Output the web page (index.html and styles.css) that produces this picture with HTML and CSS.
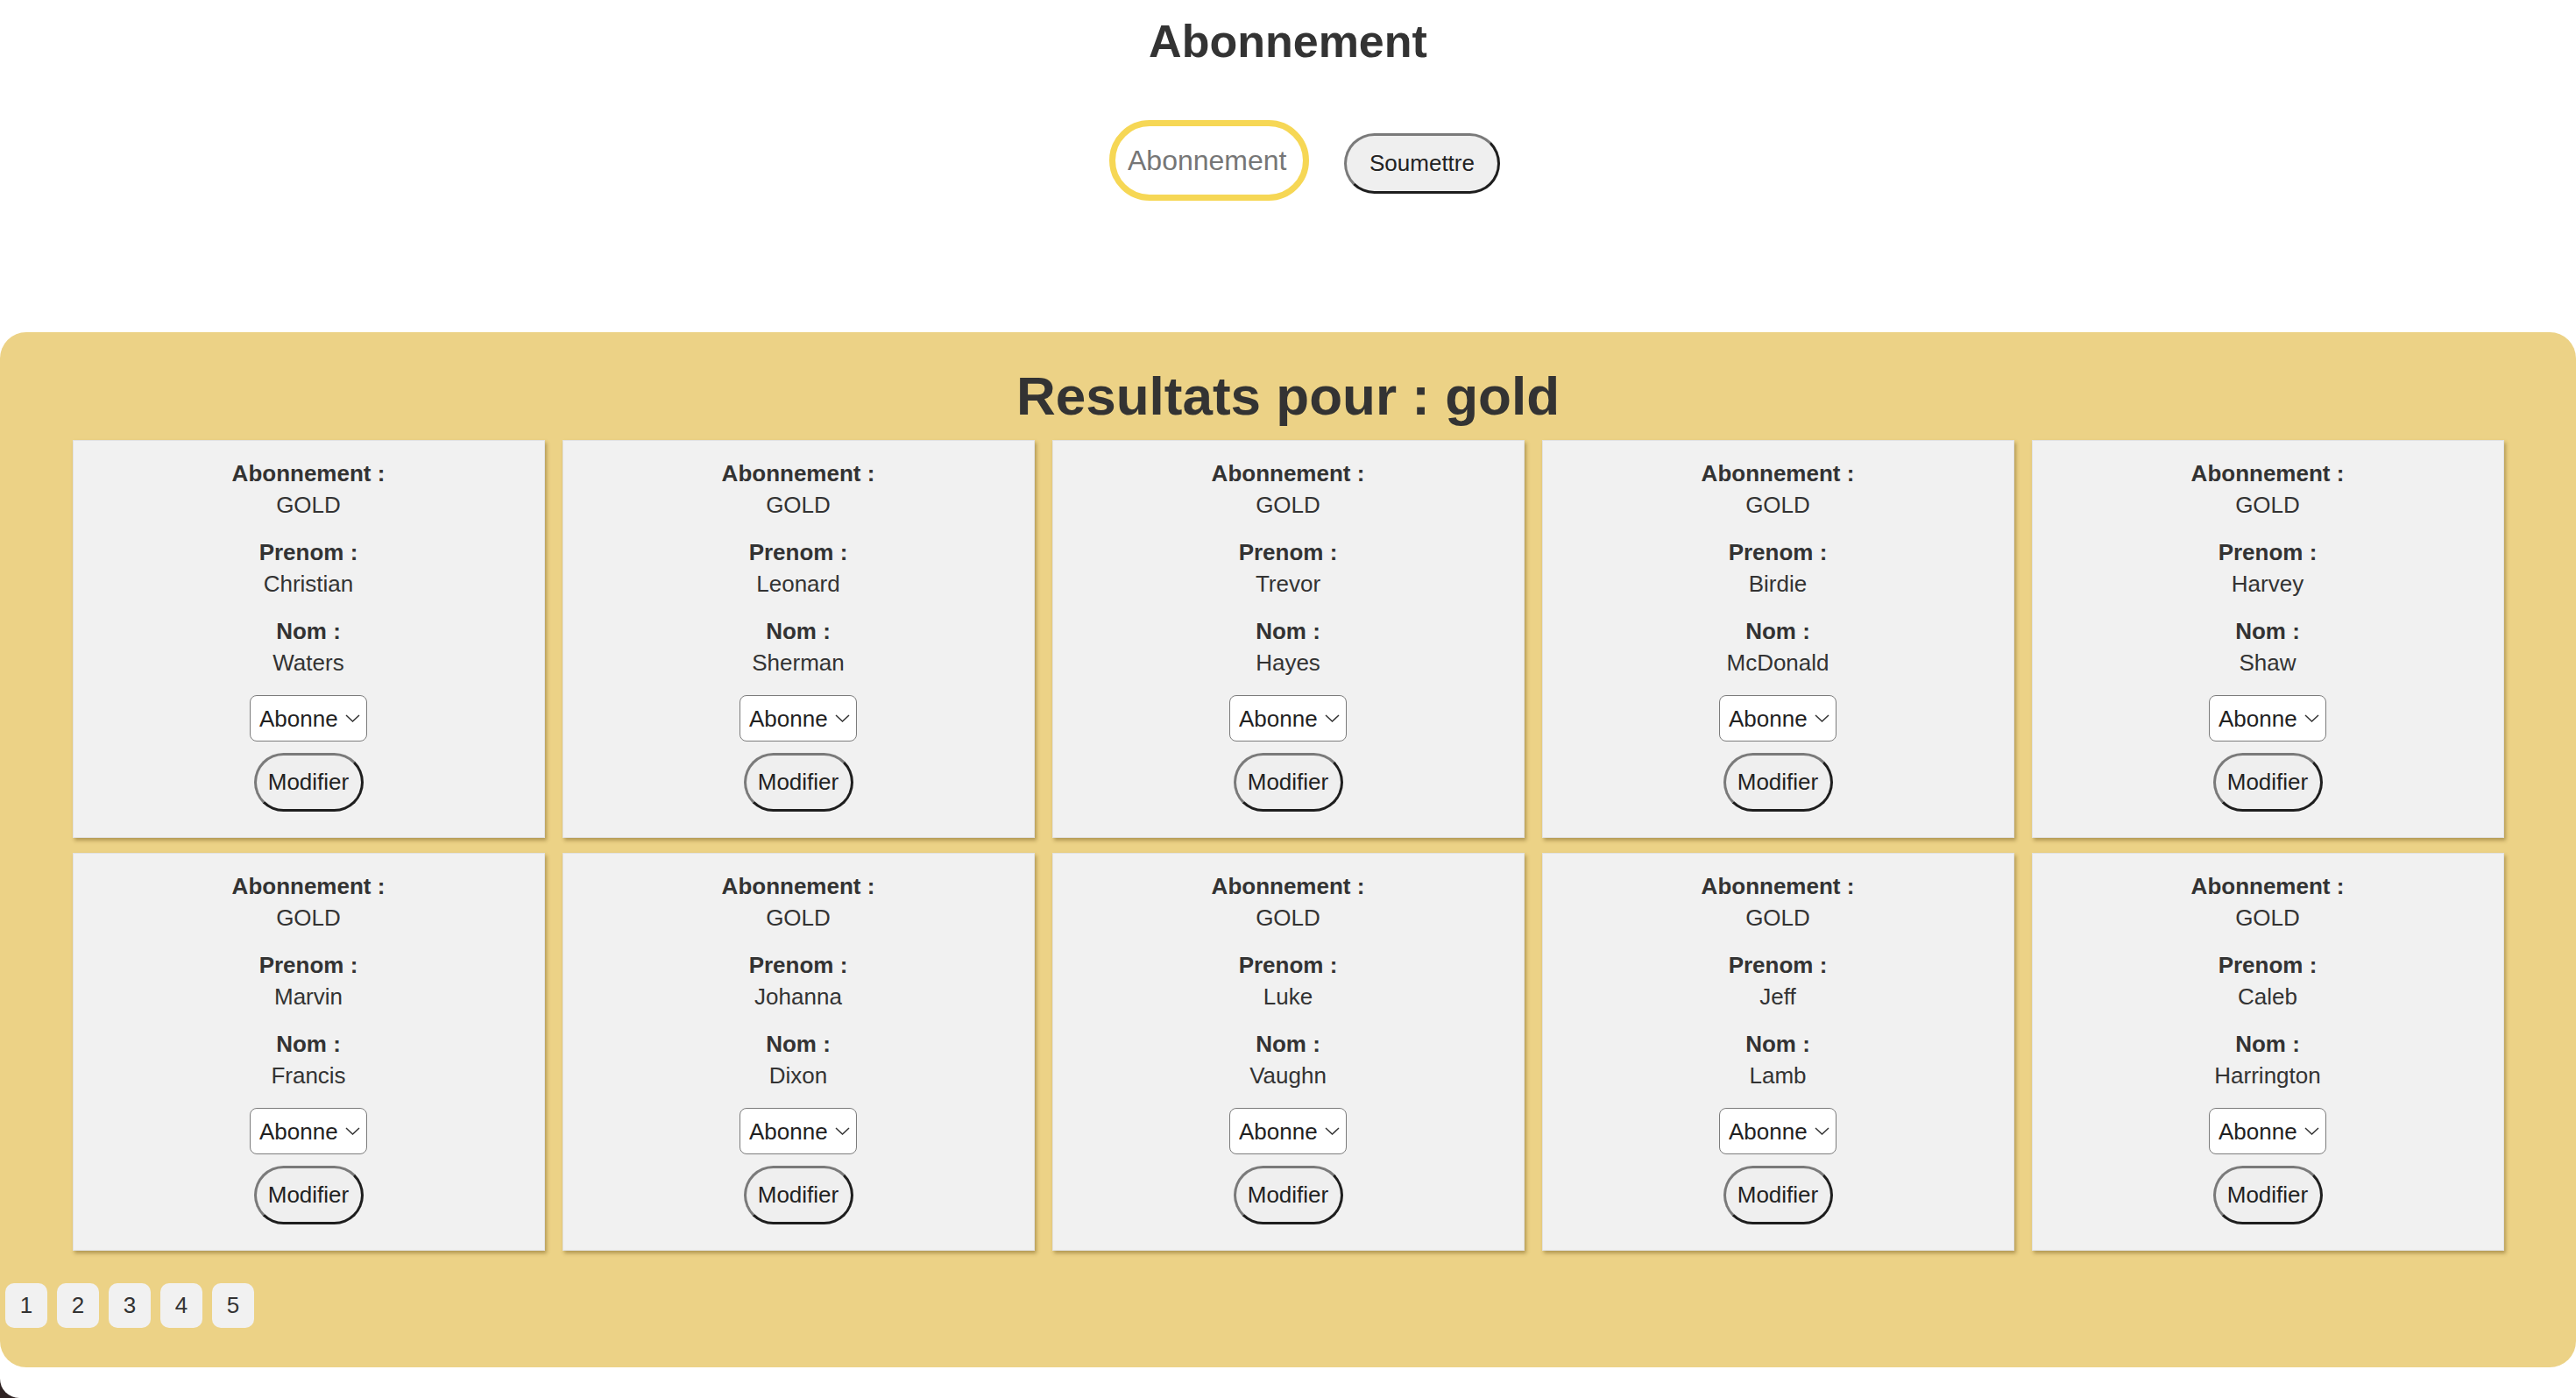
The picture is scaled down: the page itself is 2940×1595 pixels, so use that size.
FILE: index.html
```html
<!DOCTYPE html>
<html lang="fr">
<head>
<meta charset="utf-8">
<title>Abonnement</title>
<link rel="stylesheet" href="styles.css">
</head>
<body>
<h1 class="page-title">Abonnement</h1>
<form class="search">
  <input class="search-input" type="text" placeholder="Abonnement">
  <button class="btn btn-submit" type="button">Soumettre</button>
</form>

<section class="results">
  <h2 class="results-title">Resultats pour : gold</h2>
  <div class="grid">
    <div class="card"><div class="field"><b>Abonnement :</b><span>GOLD</span></div><div class="field"><b>Prenom :</b><span>Christian</span></div><div class="field"><b>Nom :</b><span>Waters</span></div><label class="select"><select><option>Abonne</option></select><svg viewBox="0 0 17 9" class="chev"><path d="M1 1l7.5 7 7.5-7"/></svg></label><button class="btn btn-mod" type="button">Modifier</button></div>
    <div class="card"><div class="field"><b>Abonnement :</b><span>GOLD</span></div><div class="field"><b>Prenom :</b><span>Leonard</span></div><div class="field"><b>Nom :</b><span>Sherman</span></div><label class="select"><select><option>Abonne</option></select><svg viewBox="0 0 17 9" class="chev"><path d="M1 1l7.5 7 7.5-7"/></svg></label><button class="btn btn-mod" type="button">Modifier</button></div>
    <div class="card"><div class="field"><b>Abonnement :</b><span>GOLD</span></div><div class="field"><b>Prenom :</b><span>Trevor</span></div><div class="field"><b>Nom :</b><span>Hayes</span></div><label class="select"><select><option>Abonne</option></select><svg viewBox="0 0 17 9" class="chev"><path d="M1 1l7.5 7 7.5-7"/></svg></label><button class="btn btn-mod" type="button">Modifier</button></div>
    <div class="card"><div class="field"><b>Abonnement :</b><span>GOLD</span></div><div class="field"><b>Prenom :</b><span>Birdie</span></div><div class="field"><b>Nom :</b><span>McDonald</span></div><label class="select"><select><option>Abonne</option></select><svg viewBox="0 0 17 9" class="chev"><path d="M1 1l7.5 7 7.5-7"/></svg></label><button class="btn btn-mod" type="button">Modifier</button></div>
    <div class="card"><div class="field"><b>Abonnement :</b><span>GOLD</span></div><div class="field"><b>Prenom :</b><span>Harvey</span></div><div class="field"><b>Nom :</b><span>Shaw</span></div><label class="select"><select><option>Abonne</option></select><svg viewBox="0 0 17 9" class="chev"><path d="M1 1l7.5 7 7.5-7"/></svg></label><button class="btn btn-mod" type="button">Modifier</button></div>
    <div class="card"><div class="field"><b>Abonnement :</b><span>GOLD</span></div><div class="field"><b>Prenom :</b><span>Marvin</span></div><div class="field"><b>Nom :</b><span>Francis</span></div><label class="select"><select><option>Abonne</option></select><svg viewBox="0 0 17 9" class="chev"><path d="M1 1l7.5 7 7.5-7"/></svg></label><button class="btn btn-mod" type="button">Modifier</button></div>
    <div class="card"><div class="field"><b>Abonnement :</b><span>GOLD</span></div><div class="field"><b>Prenom :</b><span>Johanna</span></div><div class="field"><b>Nom :</b><span>Dixon</span></div><label class="select"><select><option>Abonne</option></select><svg viewBox="0 0 17 9" class="chev"><path d="M1 1l7.5 7 7.5-7"/></svg></label><button class="btn btn-mod" type="button">Modifier</button></div>
    <div class="card"><div class="field"><b>Abonnement :</b><span>GOLD</span></div><div class="field"><b>Prenom :</b><span>Luke</span></div><div class="field"><b>Nom :</b><span>Vaughn</span></div><label class="select"><select><option>Abonne</option></select><svg viewBox="0 0 17 9" class="chev"><path d="M1 1l7.5 7 7.5-7"/></svg></label><button class="btn btn-mod" type="button">Modifier</button></div>
    <div class="card"><div class="field"><b>Abonnement :</b><span>GOLD</span></div><div class="field"><b>Prenom :</b><span>Jeff</span></div><div class="field"><b>Nom :</b><span>Lamb</span></div><label class="select"><select><option>Abonne</option></select><svg viewBox="0 0 17 9" class="chev"><path d="M1 1l7.5 7 7.5-7"/></svg></label><button class="btn btn-mod" type="button">Modifier</button></div>
    <div class="card"><div class="field"><b>Abonnement :</b><span>GOLD</span></div><div class="field"><b>Prenom :</b><span>Caleb</span></div><div class="field"><b>Nom :</b><span>Harrington</span></div><label class="select"><select><option>Abonne</option></select><svg viewBox="0 0 17 9" class="chev"><path d="M1 1l7.5 7 7.5-7"/></svg></label><button class="btn btn-mod" type="button">Modifier</button></div>
  </div>
  <nav class="pager">
    <button class="page" type="button">1</button>
    <button class="page" type="button">2</button>
    <button class="page" type="button">3</button>
    <button class="page" type="button">4</button>
    <button class="page" type="button">5</button>
  </nav>
</section>
</body>
</html>
```

FILE: styles.css
```css
* { box-sizing: border-box; }
html { background: #2e2222; }
body {
  margin: 0;
  min-height: 100vh;
  background: #ffffff;
  border-radius: 0 0 0 22px;
  font-family: "Liberation Sans", Arial, Helvetica, sans-serif;
  color: #333333;
}
.page-title {
  margin: 0;
  padding-top: 17px;
  font-size: 52px;
  line-height: 60px;
  font-weight: bold;
  text-align: center;
  color: #333333;
}
.search {
  margin-top: 60px;
  display: flex;
  justify-content: center;
  align-items: center;
  gap: 40px;
  padding-left: 38px;
}
.search-input {
  width: 228px;
  height: 92px;
  border: 7px solid #f6d755;
  border-radius: 46px;
  background: #ffffff;
  padding: 0 14px;
  font-family: "Liberation Sans", Arial, sans-serif;
  font-size: 32px;
  color: #333;
  outline: none;
}
.search-input::placeholder { color: #767676; }
.btn {
  font-family: "Liberation Sans", Arial, sans-serif;
  background: #efefef;
  color: #222222;
  border-style: solid;
  border-width: 3px;
  border-color: #7a7a7a #1e1e1e #1e1e1e #7a7a7a;
  cursor: pointer;
}
.btn-submit {
  width: 178px;
  height: 69px;
  border-radius: 35px;
  font-size: 26px;
  margin-top: 6px;
  padding: 0;
}
.results {
  margin-top: 150px;
  background: #ecd286;
  border-radius: 30px;
  padding: 37px 0 45px;
}
.results-title {
  margin: 0;
  font-size: 62px;
  line-height: 72px;
  font-weight: bold;
  text-align: center;
  color: #333333;
}
.grid {
  margin-top: 14px;
  display: grid;
  grid-template-columns: repeat(5, 539px);
  column-gap: 20px;
  row-gap: 17px;
  justify-content: center;
}
.card {
  height: 454px;
  background: #f1f1f1;
  border: 1px solid #e2e2e2;
  box-shadow: 2px 3px 4px rgba(110, 85, 25, 0.45);
  padding-top: 19px;
  display: flex;
  flex-direction: column;
  align-items: center;
  font-size: 26px;
  line-height: 36px;
  color: #333333;
}
.field {
  display: flex;
  flex-direction: column;
  align-items: center;
  margin-bottom: 18px;
}
.field:nth-of-type(3) { margin-bottom: 19px; }
.field b { font-weight: bold; }
.select {
  display: inline-flex;
  align-items: center;
  width: 134px;
  height: 53px;
  background: #ffffff;
  border: 1.5px solid #7c7c7c;
  border-radius: 8px;
  padding: 0 7px 0 10px;
}
.select select {
  appearance: none;
  -webkit-appearance: none;
  border: 0;
  background: transparent;
  font-family: "Liberation Sans", Arial, sans-serif;
  font-size: 26px;
  color: #222;
  padding: 0;
  width: 98px;
  outline: none;
}
.chev {
  width: 17px;
  height: 9px;
  fill: none;
  stroke: #333;
  stroke-width: 1.5;
}
.btn-mod {
  margin-top: 13px;
  width: 125px;
  height: 67px;
  border-radius: 34px;
  font-size: 26px;
  padding: 0;
}
.pager {
  margin-top: 37px;
  padding-left: 6px;
  display: flex;
  gap: 11px;
}
.page {
  width: 48px;
  height: 51px;
  border: 0;
  border-radius: 10px;
  background: #f1f1f1;
  font-family: "Liberation Sans", Arial, sans-serif;
  font-size: 26px;
  color: #333;
  padding: 0;
}
```
